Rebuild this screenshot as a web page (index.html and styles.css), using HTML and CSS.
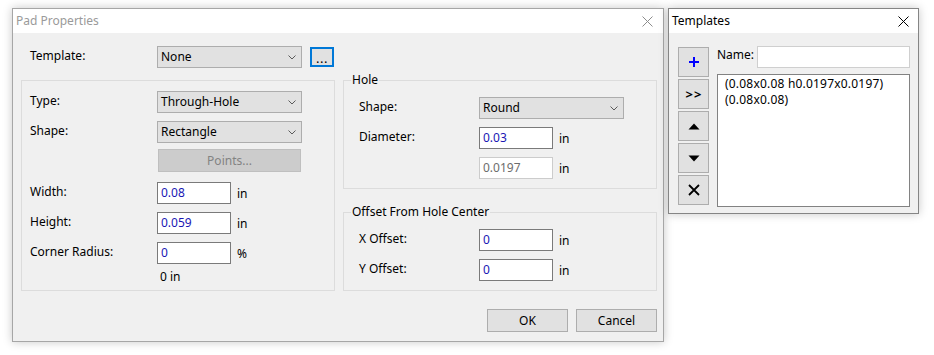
FILE: index.html
```html
<!DOCTYPE html>
<html>
	<head>
		<meta charset="utf-8">
		<title>Pad Properties</title>
		<link rel="stylesheet" href="styles.css">
	</head>
	<body>
		<!-- Pad Properties dialog -->
		<div class="win dialog">
			<div class="titlebar">
				<span class="title inactive">Pad Properties</span>
				<svg class="close" width="11" height="11" viewBox="0 0 11 11"><path d="M0.5 0.5L10.5 10.5M10.5 0.5L0.5 10.5" stroke="#8c8c8c" stroke-width="1"/></svg>
			</div>
			<div class="body">
				<div class="row template-row">
					<span class="lbl lbl-wide">Template:</span>
					<div class="combo"><span>None</span><svg class="chev" width="8" height="5" viewBox="0 0 8 5"><polyline points="0.5,0.5 4,4 7.5,0.5" fill="none" stroke="#5a5a5a"/></svg></div>
					<button class="btn dots">...</button>
				</div>

				<div class="groups">
					<div class="group pad-group">
						<div class="row">
							<span class="lbl lbl-wide">Type:</span>
							<div class="combo"><span>Through-Hole</span><svg class="chev" width="8" height="5" viewBox="0 0 8 5"><polyline points="0.5,0.5 4,4 7.5,0.5" fill="none" stroke="#5a5a5a"/></svg></div>
						</div>
						<div class="row gap-8">
							<span class="lbl lbl-wide">Shape:</span>
							<div class="combo"><span>Rectangle</span><svg class="chev" width="8" height="5" viewBox="0 0 8 5"><polyline points="0.5,0.5 4,4 7.5,0.5" fill="none" stroke="#5a5a5a"/></svg></div>
						</div>
						<div class="row gap-6">
							<span class="lbl lbl-wide"></span>
							<button class="btn points" disabled>Points...</button>
						</div>
						<div class="row gap-10">
							<span class="lbl lbl-wide">Width:</span>
							<div class="edit">0.08</div><span class="unit">in</span>
						</div>
						<div class="row gap-8">
							<span class="lbl lbl-wide">Height:</span>
							<div class="edit">0.059</div><span class="unit">in</span>
						</div>
						<div class="row gap-8">
							<span class="lbl lbl-wide">Corner Radius:</span>
							<div class="edit">0</div><span class="unit">%</span>
						</div>
						<div class="row note-row">
							<span class="lbl lbl-wide"></span>
							<span class="note">0 in</span>
						</div>
					</div>

					<div class="col-right">
						<div class="group hole-group">
							<span class="caption">Hole</span>
							<div class="row">
								<span class="lbl lbl-mid">Shape:</span>
								<div class="combo"><span>Round</span><svg class="chev" width="8" height="5" viewBox="0 0 8 5"><polyline points="0.5,0.5 4,4 7.5,0.5" fill="none" stroke="#5a5a5a"/></svg></div>
							</div>
							<div class="row gap-8">
								<span class="lbl lbl-mid">Diameter:</span>
								<div class="edit">0.03</div><span class="unit">in</span>
							</div>
							<div class="row gap-8">
								<span class="lbl lbl-mid"></span>
								<div class="edit disabled">0.0197</div><span class="unit">in</span>
							</div>
						</div>
						<div class="group offset-group">
							<span class="caption">Offset From Hole Center</span>
							<div class="row">
								<span class="lbl lbl-mid">X Offset:</span>
								<div class="edit">0</div><span class="unit">in</span>
							</div>
							<div class="row gap-8">
								<span class="lbl lbl-mid">Y Offset:</span>
								<div class="edit">0</div><span class="unit">in</span>
							</div>
						</div>
					</div>
				</div>

				<div class="actions">
					<button class="btn action">OK</button>
					<button class="btn action">Cancel</button>
				</div>
			</div>
		</div>

		<!-- Templates tool window -->
		<div class="win templates">
			<div class="titlebar">
				<span class="title">Templates</span>
				<svg class="close" width="11" height="11" viewBox="0 0 11 11"><path d="M0.5 0.5L10.5 10.5M10.5 0.5L0.5 10.5" stroke="#000" stroke-width="1"/></svg>
			</div>
			<div class="tpl-body">
				<div class="tool-col">
					<button class="btn tool"><svg width="12" height="12" viewBox="0 0 12 12"><path d="M6 1V11M1 6H11" stroke="#0000ff" stroke-width="2"/></svg></button>
					<button class="btn tool arrows">&gt;&gt;</button>
					<button class="btn tool"><svg width="12" height="7" viewBox="0 0 12 7"><polygon points="6,0.5 11.5,6.5 0.5,6.5" fill="#000"/></svg></button>
					<button class="btn tool"><svg width="12" height="7" viewBox="0 0 12 7"><polygon points="0.5,0.5 11.5,0.5 6,6.5" fill="#000"/></svg></button>
					<button class="btn tool"><svg width="12" height="12" viewBox="0 0 12 12"><path d="M1 1L11 11M11 1L1 11" stroke="#000" stroke-width="1.8"/></svg></button>
				</div>
				<div class="tpl-main">
					<div class="name-row">
						<span class="name-lbl">Name:</span>
						<div class="edit name-edit"></div>
					</div>
					<div class="list">
						<div class="item">(0.08x0.08 h0.0197x0.0197)</div>
						<div class="item">(0.08x0.08)</div>
					</div>
				</div>
			</div>
		</div>
	</body>
</html>
```

FILE: styles.css
```css
body {
	margin: 0;
	background-color: #ffffff;
	font-family: "Noto Sans", "Open Sans", Arial, sans-serif;
	font-size: 12px;
	line-height: 16px;
	color: #000000;
}

/* windows sitting on the desktop */
.win {
	position: absolute;
	box-sizing: border-box;
	background-color: #f0f0f0;
	box-shadow: 0 0 9px rgba(0, 0, 0, 0.22);
}

.dialog {
	left: 12px;
	top: 8px;
	width: 652px;
	height: 334px;
	border: 1px solid #a6a6a6;
}

.templates {
	left: 668px;
	top: 8px;
	width: 251px;
	height: 206px;
	border: 1px solid #858585;
}

.titlebar {
	height: 24px;
	background-color: #ffffff;
	display: flex;
	align-items: center;
	justify-content: space-between;
	padding: 0 10px 0 3px;
}

.title.inactive {
	color: #9a9a9a;
}

.templates .titlebar {
	padding-left: 3px;
	padding-right: 9px;
}

/* dialog body */
.body {
	padding: 13px 5px 0 8px;
}

.row {
	display: flex;
	align-items: center;
	height: 22px;
}

.template-row {
	padding-left: 9px;
}

.lbl {
	flex: none;
	position: relative;
	top: -1px;
}

.lbl-wide {
	width: 127px;
}

.lbl-mid {
	width: 120px;
}

.gap-6 {
	margin-top: 6px;
	height: 23px;
}

.gap-8 {
	margin-top: 8px;
}

.gap-10 {
	margin-top: 10px;
}

.combo {
	box-sizing: border-box;
	width: 145px;
	height: 22px;
	background-color: #e1e1e1;
	border: 1px solid #adadad;
	display: flex;
	align-items: center;
	justify-content: space-between;
	padding: 0 5px 0 3px;
}

.chev {
	flex: none;
}

.btn {
	box-sizing: border-box;
	font-family: inherit;
	font-size: 12px;
	color: #000000;
	background-color: #e1e1e1;
	border: 1px solid #adadad;
	padding: 0;
	margin: 0;
}

.dots {
	width: 24px;
	height: 20px;
	margin-left: 8px;
	border: 2px solid #0078d7;
	font-size: 13px;
	line-height: 12px;
	padding-top: 1px;
	letter-spacing: 0.5px;
}

.points {
	width: 143px;
	height: 23px;
	margin-left: 1px;
	background-color: #cccccc;
	border-color: #bfbfbf;
	color: #838383;
}

.edit {
	box-sizing: border-box;
	width: 74px;
	height: 22px;
	background-color: #ffffff;
	border: 1px solid #7a7a7a;
	padding: 0 3px;
	line-height: 19px;
	color: #1a16b4;
}

.edit.disabled {
	border-color: #cccccc;
	color: #6d6d6d;
}

.unit {
	margin-left: 6px;
	position: relative;
	top: 1px;
}

.note-row {
	height: 18px;
	margin-top: 4px;
}

.note {
	margin-left: 3px;
}

/* group boxes */
.groups {
	display: flex;
	gap: 8px;
	margin-top: 12px;
}

.group {
	box-sizing: border-box;
	position: relative;
	border: 1px solid #dcdcdc;
}

.pad-group {
	width: 314px;
	height: 211px;
	padding: 10px 0 0 8px;
}

.col-right {
	display: flex;
	flex-direction: column;
	gap: 23px;
	width: 314px;
}

.hole-group {
	height: 109px;
	padding: 16px 0 0 15px;
}

.offset-group {
	height: 79px;
	padding: 16px 0 0 15px;
}

.caption {
	position: absolute;
	top: -9px;
	left: 7px;
	padding: 0 1px;
	background-color: #f0f0f0;
}

.actions {
	display: flex;
	justify-content: flex-end;
	gap: 8px;
	margin-top: 18px;
	padding-right: 1px;
}

.action {
	width: 81px;
	height: 23px;
}

/* templates window */
.tpl-body {
	display: flex;
	gap: 8px;
	padding: 14px 0 0 9px;
}

.tool-col {
	display: flex;
	flex-direction: column;
	gap: 2px;
}

.tool {
	width: 31px;
	height: 30px;
	display: flex;
	align-items: center;
	justify-content: center;
}

.arrows {
	font-weight: bold;
	font-size: 13px;
	letter-spacing: 1px;
	padding-left: 1px;
}

.tpl-main {
	margin-top: -1px;
}

.name-row {
	display: flex;
	align-items: center;
}

.name-lbl {
	width: 40px;
	position: relative;
	top: -2px;
}

.name-edit {
	width: 153px;
	border-color: #cfcfcf;
}

.list {
	box-sizing: border-box;
	width: 193px;
	height: 133px;
	margin-top: 6px;
	background-color: #ffffff;
	border: 1px solid #828282;
	padding: 1px 7px;
}

.item {
	line-height: 16px;
	letter-spacing: 0.2px;
}
```
